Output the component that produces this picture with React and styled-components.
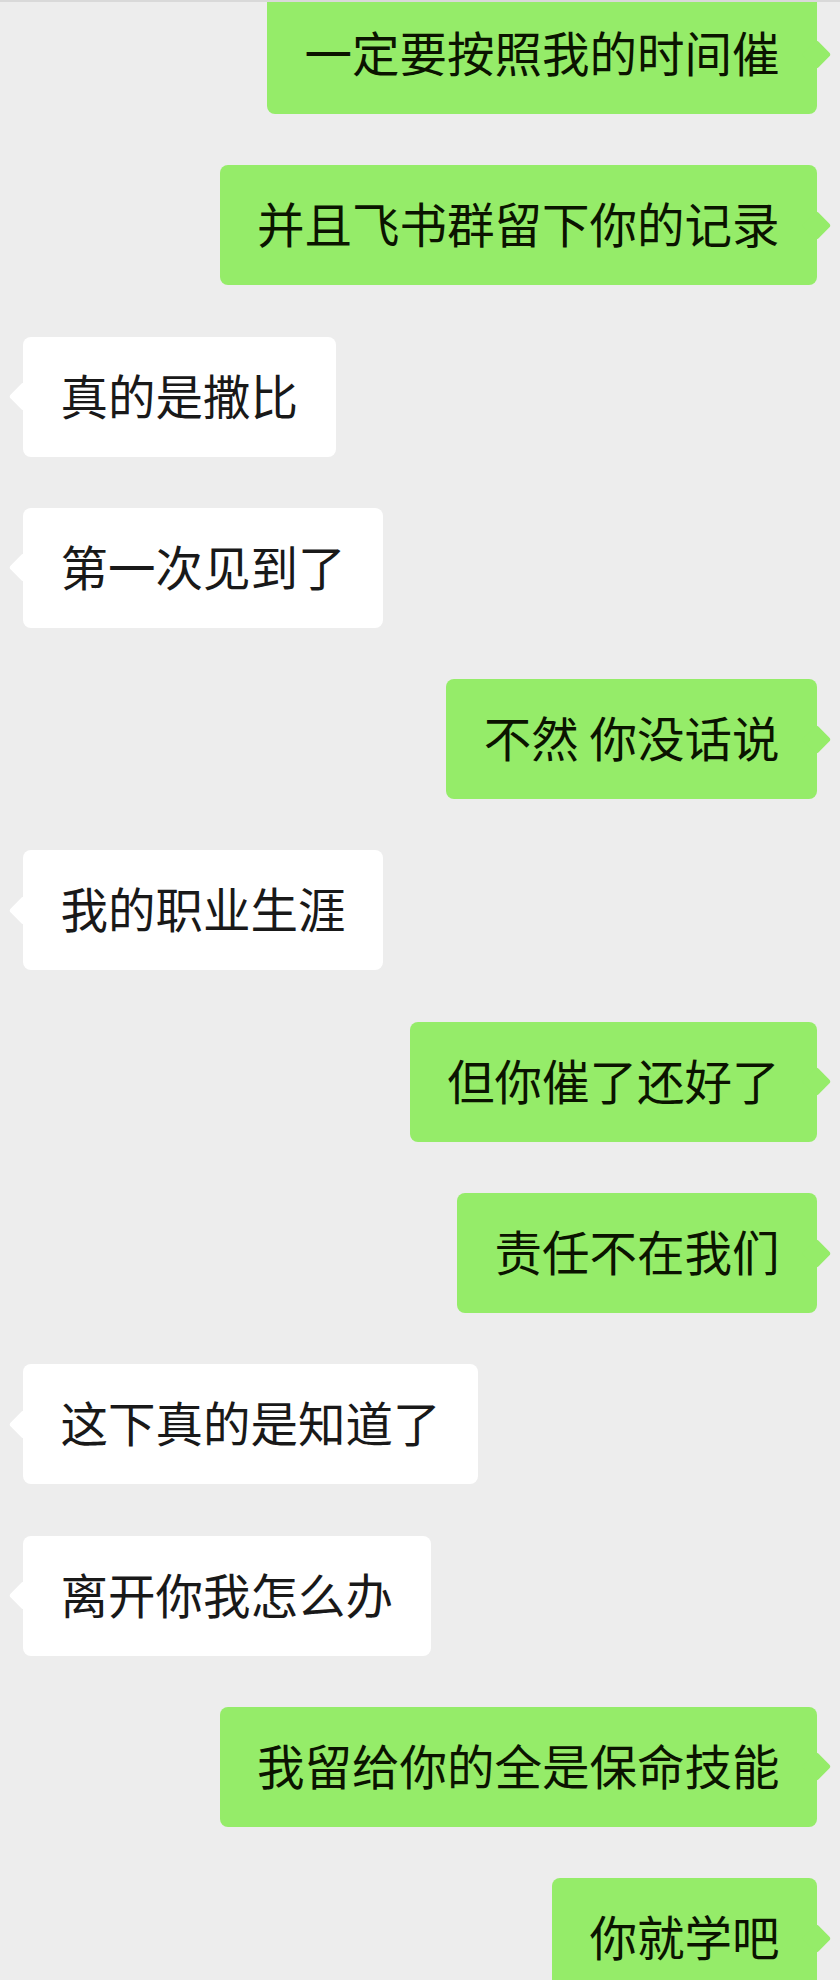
import styled, { createGlobalStyle } from 'styled-components';

const GlobalStyle = createGlobalStyle`
  html, body {
    margin: 0;
    padding: 0;
    background: #ededed;
  }
  body {
    font-family: 'Noto Sans CJK SC', 'Noto Sans', sans-serif;
    overflow: hidden;
  }
`;

const Screen = styled.div`
  width: 840px;
  height: 1980px;
  overflow: hidden;
  background: #ededed;
  border-top: 2px solid #d9d9d9;
  box-sizing: border-box;
`;

const Thread = styled.div`
  display: flex;
  flex-direction: column;
  gap: 51.3px;
  margin-top: -8px;
`;

const Row = styled.div`
  display: flex;
  justify-content: ${(p) => (p.$mine ? 'flex-end' : 'flex-start')};
  padding: 0 23px;
`;

const Bubble = styled.div`
  position: relative;
  box-sizing: border-box;
  height: 120px;
  padding: 24px 37.5px 28px;
  border-radius: 8px;
  background: ${(p) => (p.$mine ? '#95ec69' : '#ffffff')};
  color: ${(p) => (p.$mine ? '#0b1400' : '#191919')};
  font-size: 47.5px;
  line-height: 68px;
  white-space: pre;

  /* the little tail pointing at the speaker */
  &::after {
    content: '';
    position: absolute;
    top: 50%;
    ${(p) => (p.$mine ? 'right: -10px;' : 'left: -10px;')}
    width: 21px;
    height: 21px;
    margin-top: -10.5px;
    background: inherit;
    border-radius: 3px;
    transform: rotate(45deg);
  }
`;

const messages = [
  { mine: true, text: '一定要按照我的时间催' },
  { mine: true, text: '并且飞书群留下你的记录' },
  { mine: false, text: '真的是撒比' },
  { mine: false, text: '第一次见到了' },
  { mine: true, text: '不然 你没话说' },
  { mine: false, text: '我的职业生涯' },
  { mine: true, text: '但你催了还好了' },
  { mine: true, text: '责任不在我们' },
  { mine: false, text: '这下真的是知道了' },
  { mine: false, text: '离开你我怎么办' },
  { mine: true, text: '我留给你的全是保命技能' },
  { mine: true, text: '你就学吧' },
];

export default function App() {
  return (
    <>
      <GlobalStyle />
      <Screen>
        <Thread>
          {messages.map((m, i) => (
            <Row key={i} $mine={m.mine}>
              <Bubble $mine={m.mine}>{m.text}</Bubble>
            </Row>
          ))}
        </Thread>
      </Screen>
    </>
  );
}
